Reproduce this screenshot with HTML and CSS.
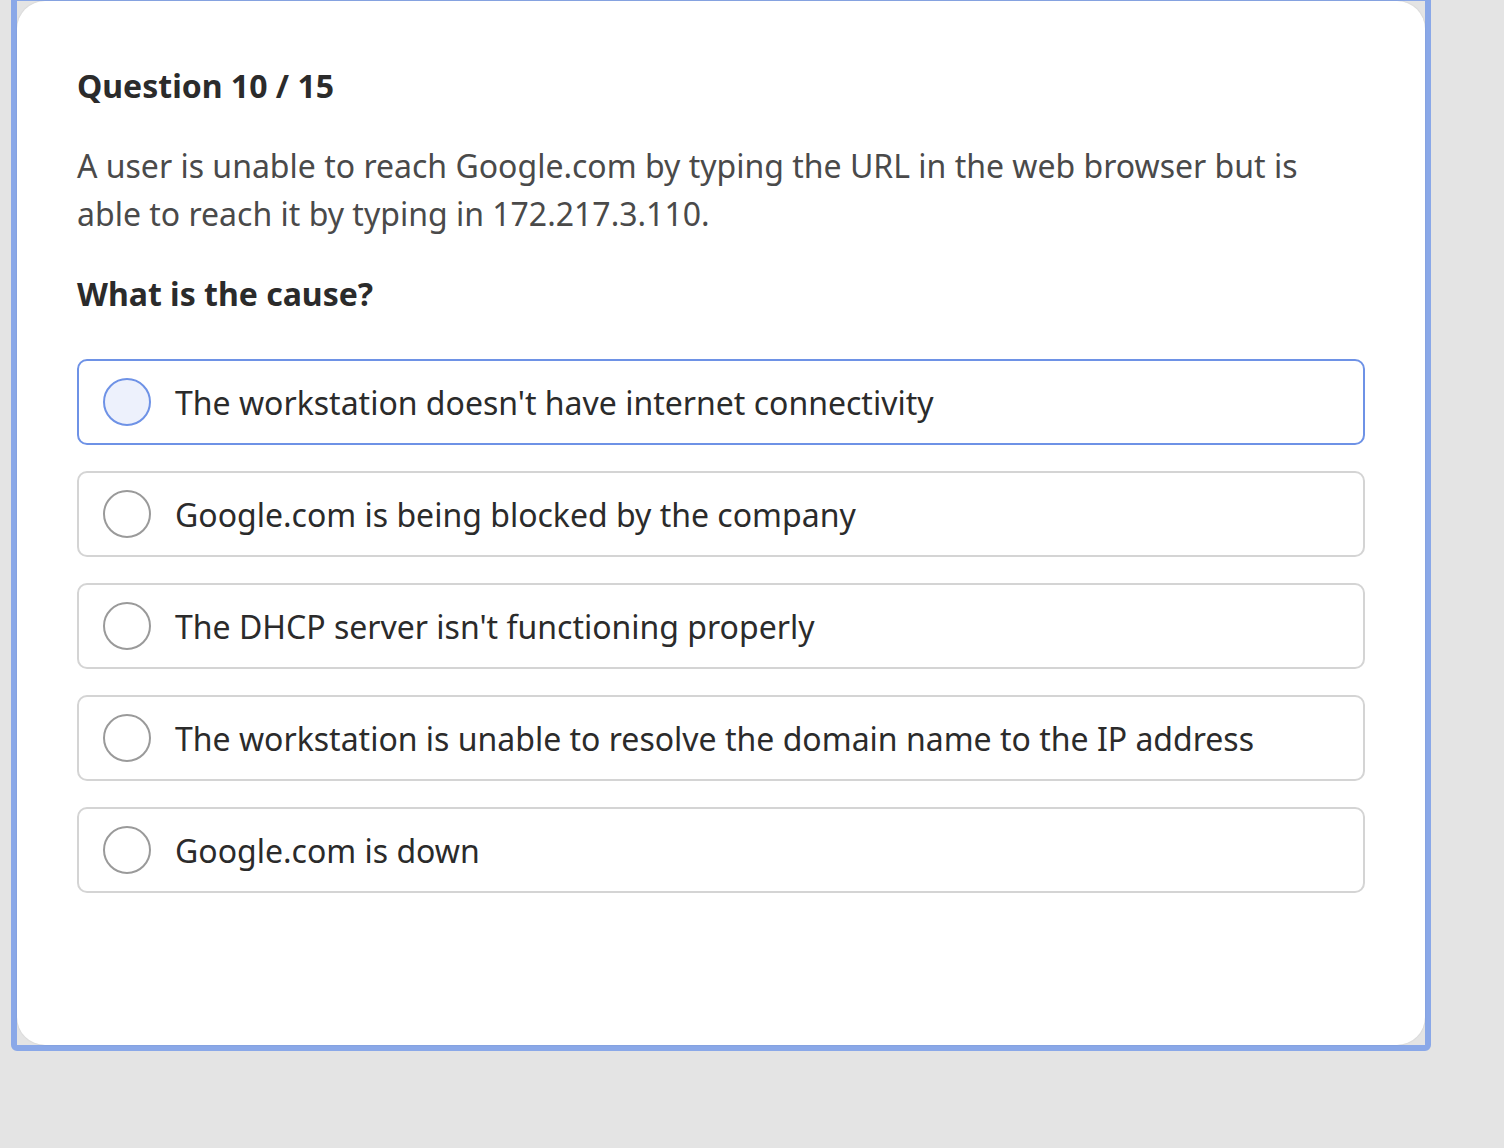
FILE: index.html
```html
<!DOCTYPE html>
<html>
<head>
<meta charset="utf-8">
<link rel="stylesheet" href="styles.css">
</head>
<body>
<div class="frame">
  <div class="card">
    <h2 class="qnum">Question 10 / 15</h2>
    <p class="qtext">A user is unable to reach Google.com by typing the URL in the web browser but is able to reach it by typing in 172.217.3.110.</p>
    <h3 class="prompt">What is the cause?</h3>
    <div class="options">
      <div class="option active"><span class="radio"></span><span class="label">The workstation doesn't have internet connectivity</span></div>
      <div class="option"><span class="radio"></span><span class="label">Google.com is being blocked by the company</span></div>
      <div class="option"><span class="radio"></span><span class="label">The DHCP server isn't functioning properly</span></div>
      <div class="option"><span class="radio"></span><span class="label">The workstation is unable to resolve the domain name to the IP address</span></div>
      <div class="option"><span class="radio"></span><span class="label">Google.com is down</span></div>
    </div>
  </div>
</div>
</body>
</html>
```

FILE: styles.css
```css
html, body {
  margin: 0;
  padding: 0;
  background: #e4e4e4;
  height: 100%;
  overflow: hidden;
}
body {
  font-family: "Noto Sans", "Open Sans", sans-serif;
}
.frame {
  margin-left: 11px;
  margin-top: -5px;
  width: 1408px;
  border: 6px solid #8aa8e8;
  border-radius: 0 0 6px 6px;
  background: #e4e4e4;
}
.card {
  background: #fff;
  border-radius: 28px;
  height: 1044px;
  box-sizing: border-box;
  padding: 65px 60px 0 60px;
  box-shadow: 0 0 2px rgba(0,0,0,0.12);
}
.qnum {
  margin: 0;
  font-size: 32px;
  line-height: 40px;
  font-weight: 700;
  color: #2b2b2b;
}
.qtext {
  margin: 36px 0 0;
  font-size: 32px;
  line-height: 48px;
  color: #4a4a4a;
  max-width: 1260px;
}
.prompt {
  margin: 36px 0 0;
  font-size: 32px;
  line-height: 40px;
  font-weight: 700;
  color: #2b2b2b;
}
.options {
  margin-top: 45px;
  width: 1288px;
  display: flex;
  flex-direction: column;
  gap: 26px;
}
.option {
  display: flex;
  align-items: center;
  gap: 24px;
  height: 86px;
  box-sizing: border-box;
  padding: 0 24px;
  border: 2px solid #d4d4d4;
  border-radius: 10px;
}
.option.active {
  border-color: #6e92e6;
}
.radio {
  width: 48px;
  height: 48px;
  box-sizing: border-box;
  border-radius: 50%;
  border: 2px solid #9a9a9a;
  flex: none;
}
.option.active .radio {
  border-color: #6e92e6;
  background: #edf1fc;
}
.label {
  font-size: 32px;
  color: #2b2b2b;
}
```
